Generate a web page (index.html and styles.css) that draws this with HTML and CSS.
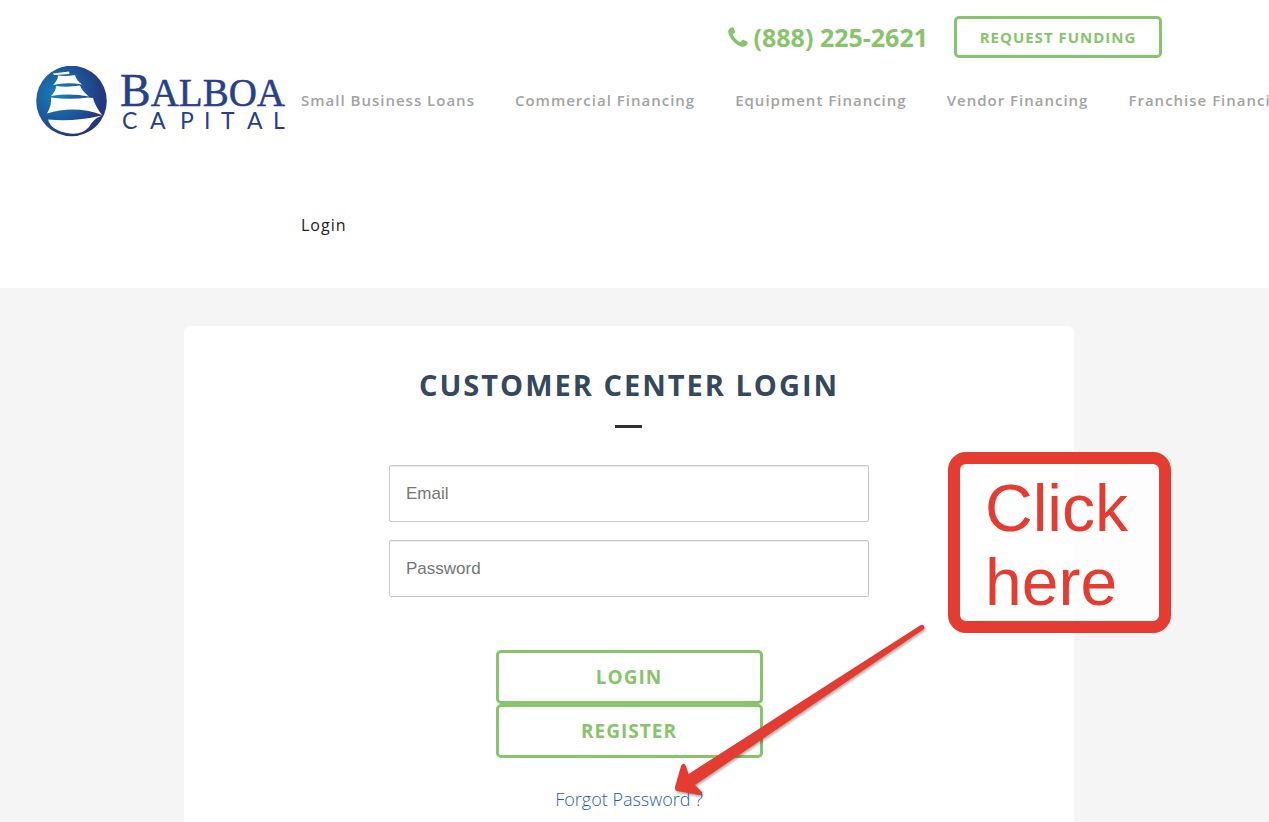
FILE: index.html
```
<!DOCTYPE html>
<html lang="en">
<head>
  <meta charset="UTF-8">
  <title>Customer Center Login</title>
  <link rel="stylesheet" href="styles.css">
</head>
<body>
  <header class="header">
    <div class="topbar">
      <a class="phone" href="tel:8882252621">
        <svg class="phone-icon" viewBox="0 0 20 20" aria-hidden="true">
          <path d="M1.600 1.600 C2.800.600 4.200.100 4.900.200 C5.500.400 7 3.800 7.200 4.700 C7.300 5.600 4.900 6.700 4.900 7.500 C5.200 9.800 10 14.600 12.400 15 C13.200 15 14.300 12.700 15.200 12.800 C16.100 13 19.500 14.600 19.700 15.200 C19.900 16.200 18.900 18.300 17.600 19 C15.400 20.200 12.700 19.800 9.600 17.900 C6.100 15.800 3 12.300 1.200 8.600 C-.200 5.600-.100 3 1.600 1.600Z"/>
        </svg>
        (888) 225-2621
      </a>
      <button class="btn btn-small" type="button">Request Funding</button>
    </div>
    <div class="navbar">
      <a class="logo" href="#" aria-label="Balboa Capital">
        <svg viewBox="0 0 250 71">
          <defs>
            <radialGradient id="globe" cx="0.3" cy="0.4" r="0.75">
              <stop offset="0" stop-color="#1583b8"/>
              <stop offset="0.45" stop-color="#1c5c9e"/>
              <stop offset="0.85" stop-color="#24377f"/>
            </radialGradient>
          </defs>
          <circle cx="35.500" cy="35" r="35.300" fill="url(#globe)"/>
          <g fill="#fff">
            <path d="M17 7.500 L33 5.500 L33.500 8 L18 9Z"/>
            <path d="M22 9.500 Q30 10.500 39 9 Q40 14 46 18.500 Q31 16 17 19 Q22 14 22 9.500Z"/>
            <path d="M20 20 Q32 21.500 44 19.500 Q46 25 53 30.500 Q34 27 15 30 Q20 25 20 20Z"/>
            <path d="M15 31.500 Q34 34 52 31.500 L57 32 Q59 40 66 49 Q39 39 11 47.500 Q16 39 15 31.500Z"/>
            <path d="M12 53.500 Q38 56 66 49.500 Q57 53 53 61 Q46 69 34 67.500 Q15 65 12 53.500Z"/>
          </g>
          <text class="logo-name" x="84" y="40"><tspan class="logo-initial">B</tspan>ALBOA</text>
          <text class="logo-sub" x="86 114 144 168 185 211 237" y="63">CAPITAL</text>
        </svg>
      </a>
      <nav class="nav">
        <ul class="nav-row">
          <li><a href="#">Small Business Loans</a></li>
          <li><a href="#">Commercial Financing</a></li>
          <li><a href="#">Equipment Financing</a></li>
          <li><a href="#">Vendor Financing</a></li>
          <li><a href="#">Franchise Financing</a></li>
        </ul>
        <ul class="nav-row">
          <li><a class="active" href="#">Login</a></li>
        </ul>
      </nav>
    </div>
  </header>

  <main class="main">
    <section class="card">
      <h1 class="title">Customer Center Login</h1>
      <form class="login-form">
        <input class="field" type="email" placeholder="Email" aria-label="Email">
        <input class="field" type="password" placeholder="Password" aria-label="Password">
        <div class="actions">
          <button class="btn btn-large" type="submit">Login</button>
          <button class="btn btn-large" type="button">Register</button>
        </div>
      </form>
      <a class="forgot" href="#">Forgot Password ?</a>
    </section>
  </main>

  <!-- hint pointing at the password link -->
  <svg class="arrow" viewBox="0 0 260 180" aria-hidden="true">
    <path d="M252 5.500 Q256 3.500 256.500 7.500 L256 9 L27 165 L34 172 Q35 175 31 175 L9 171 Q6.500 170 7 167 L13 146 Q15 142 17.500 145 L20.500 154Z"/>
  </svg>
  <div class="hint">Click<br>here</div>
</body>
</html>
```
FILE: styles.css
```
* {
  box-sizing: border-box;
}

body {
  display: flex;
  flex-direction: column;
  position: relative;
  min-height: 100vh;
  margin: 0;
  overflow-x: hidden;
  background: #fff;
  font-family: "Open Sans", sans-serif;
}

a {
  text-decoration: none;
}

/* header */
.header {
  padding-bottom: 20px;
  overflow: hidden;
}

.topbar {
  display: flex;
  justify-content: flex-end;
  align-items: center;
  gap: 26px;
  padding: 16px 107px 0 36px;
}

.phone {
  display: flex;
  align-items: center;
  gap: 6px;
  color: #87c46b;
  font-size: 25px;
  font-weight: 700;
  line-height: 42px;
}

.phone-icon {
  width: 20px;
  height: 20px;
  fill: #87c46b;
}

.btn {
  padding: 0;
  border: 3px solid #87c46b;
  border-radius: 5px;
  background: #fff;
  color: #87c46b;
  font-family: inherit;
  font-weight: 700;
  letter-spacing: 1px;
  text-transform: uppercase;
}

.btn-small {
  width: 208px;
  height: 42px;
  font-size: 15px;
}

.btn-large {
  width: 267px;
  height: 54px;
  font-size: 19px;
}

.navbar {
  display: flex;
  align-items: flex-start;
  gap: 15px;
  padding-left: 36px;
}

.logo {
  flex: none;
  width: 250px;
  padding-top: 8px;
}

.logo svg {
  display: block;
}

.logo text {
  fill: #26408b;
}

.logo-name {
  font-family: "Liberation Serif", serif;
  font-size: 39px;
  stroke: #26408b;
  stroke-width: 0.5px;
}

.logo-initial {
  font-size: 46px;
}

.logo-sub {
  font-family: Lato, sans-serif;
  font-size: 23px;
}

.nav {
  display: flex;
  flex-direction: column;
  gap: 40px;
}

.nav-row {
  display: flex;
  gap: 40px;
  margin: 0;
  padding: 0;
  list-style: none;
  white-space: nowrap;
}

.nav-row a {
  color: #a3a3a3;
  font-size: 15px;
  font-weight: 600;
  letter-spacing: 1px;
  line-height: 85px;
}

.nav-row .active {
  color: #222;
  font-size: 16px;
  font-weight: 400;
}

/* login card */
.main {
  display: flex;
  flex: 1;
  justify-content: center;
  padding: 38px 11px 0 0;
  background: #f5f5f5;
}

.card {
  display: flex;
  flex-direction: column;
  align-items: center;
  width: 100%;
  max-width: 890px;
  padding-top: 39px;
  border-radius: 6px 6px 0 0;
  background: #fff;
}

.title {
  margin: 0 0 37px;
  color: #34495e;
  font-size: 29px;
  font-weight: 700;
  letter-spacing: 2px;
  line-height: 40px;
  text-transform: uppercase;
}

.title::after {
  content: "";
  display: block;
  width: 27px;
  height: 3px;
  margin: 20px auto 0;
  background: #303030;
}

.login-form {
  display: flex;
  flex-direction: column;
  align-items: center;
  gap: 18px;
  width: 100%;
  max-width: 480px;
}

.field {
  width: 100%;
  height: 57px;
  padding: 0 16px;
  border: 1px solid #c8c8c8;
  border-radius: 2px;
  background: #fff;
  box-shadow: inset 0 1px 1px rgba(0, 0, 0, 0.08);
  font-family: "Liberation Sans", sans-serif;
  font-size: 17px;
}

.field::placeholder {
  color: #757575;
}

.actions {
  display: flex;
  flex-direction: column;
  margin-top: 35px;
}

.forgot {
  margin-top: 29px;
  color: #1a5fb4;
  font-size: 18px;
  font-weight: 300;
  line-height: 24px;
}

/* hint */
.arrow {
  position: absolute;
  top: 620px;
  left: 668px;
  width: 260px;
  height: 180px;
  fill: #e53c31;
  filter: drop-shadow(1px 2px 1px rgba(0, 0, 0, 0.3));
  pointer-events: none;
}

.hint {
  position: absolute;
  top: 452px;
  left: 948px;
  width: 223px;
  height: 181px;
  padding: 7px 25px;
  border: 12px solid #e53c31;
  border-radius: 18px;
  background: rgba(255, 255, 255, 0.8);
  color: #e53c31;
  font-family: "Liberation Sans", sans-serif;
  font-size: 66px;
  line-height: 74px;
}
```
